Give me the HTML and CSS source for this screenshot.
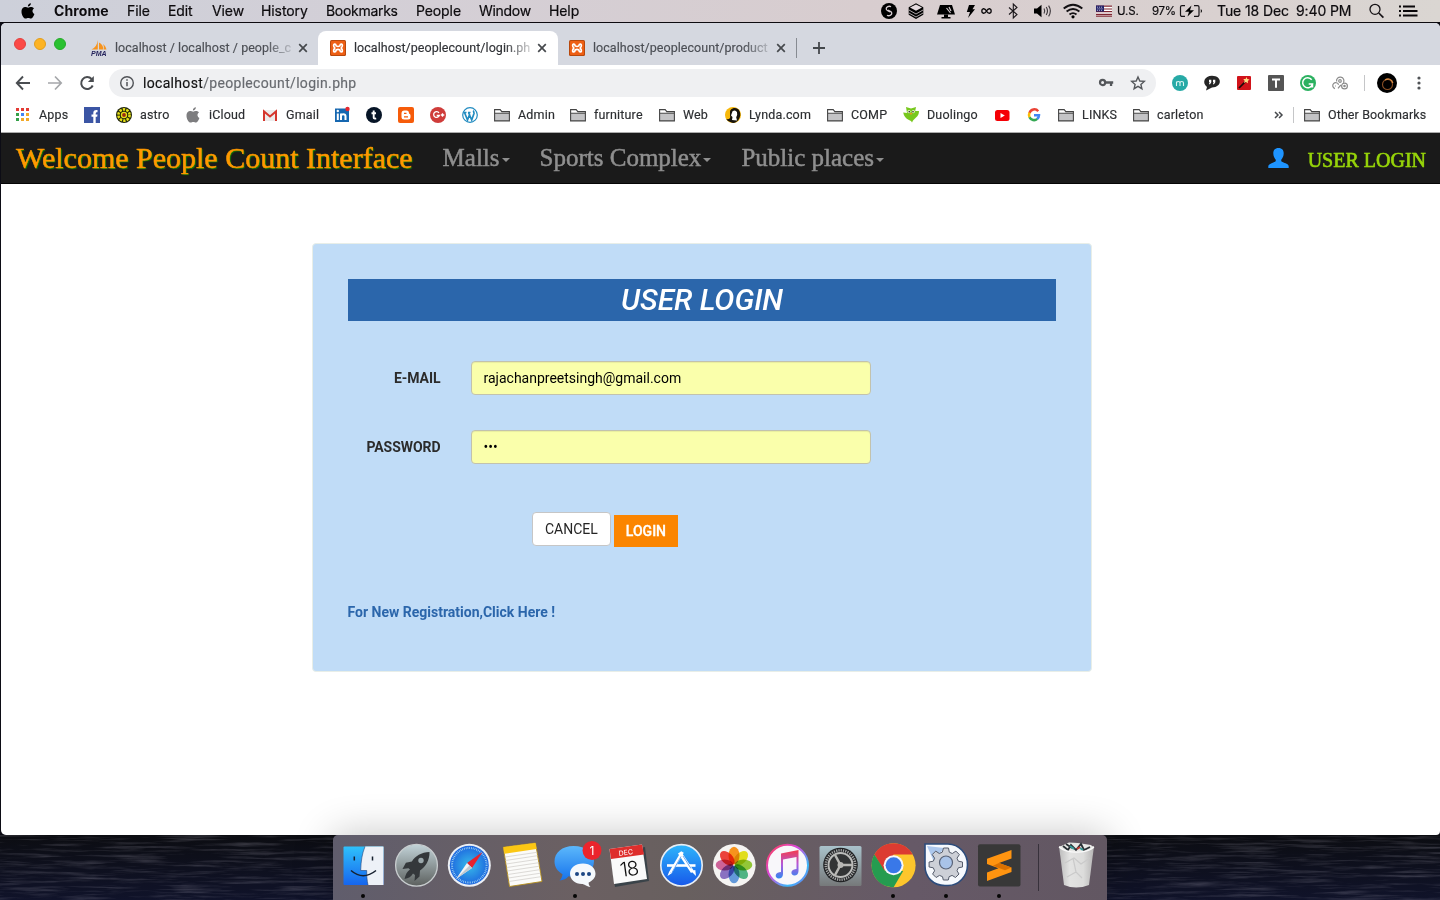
FILE: index.html
```html
<!DOCTYPE html>
<html lang="en">
<head>
<meta charset="utf-8">
<title>People Count</title>
<link rel="stylesheet" href="styles.css">
</head>
<body>
<svg class="defs" aria-hidden="true">
  <symbol id="folder" viewBox="0 0 16 16"><path d="M.7 14.3V2.5h5.6l1.6 2h7.400v9.800z" fill="#fff"/><path d="M1 6.500h14v7.500H1z" fill="#c4c4c6"/><path d="M.6 13.900V2.600h5.600l1.600 2h7.600v9.300zM.6 6.300h14.800" fill="none" stroke="#444" stroke-width="1.100"/></symbol>
  <symbol id="xampp" viewBox="0 0 16 16"><rect width="16" height="16" rx="1.500" fill="#b8480c"/><rect x="1" y="1" width="14" height="14" rx="1" fill="#ee5f14"/><path d="M6.200 5.900Q5.800 4 4.500 4.200T3.900 6.500Q5.400 8 3.900 9.500 3.200 11.700 4.500 11.900T6.200 10Q8 8.800 9.800 10q.4 2 1.700 1.900t.6-2.400Q10.600 8 12.100 6.500 12.800 4.400 11.500 4.200T9.800 5.900Q8 7.100 6.200 5.900z" fill="none" stroke="#fff" stroke-width="1.700"/></symbol>
  <symbol id="close" viewBox="0 0 10 10"><path d="M1.200 1.200l7.600 7.600M8.800 1.200L1.200 8.800" stroke="#46494d" stroke-width="1.700" fill="none"/></symbol>
  <symbol id="apple" viewBox="0 0 16 16"><path d="M10.900.2c.1 1.900-1.400 3.300-3 3.300C7.700 1.800 9.300.3 10.900.2zM14 5.500c-2.200 1.300-1.900 4.400.4 5.400-.6 2-2 4.600-3.600 4.600-.9 0-1.400-.6-2.500-.6-1.200 0-1.700.6-2.600.6C3.500 15.500 1.500 11.800 1.500 8.700c0-5 4.200-5.500 6.700-4 1.600-1 4.400-.9 5.800.8z"/></symbol>
</svg>

<header class="menubar">
  <svg width="16" height="16"><use href="#apple"/></svg>
  <b class="m-app">Chrome</b><span>File</span><span>Edit</span><span>View</span><span>History</span><span class="m-tight">Bookmarks</span><span>People</span><span class="m-tight">Window</span><span>Help</span>
  <svg width="18" height="18" viewBox="0 0 18 18"><circle cx="9" cy="9" r="8"/><path d="M11 4.800C9 3.400 6 5 6.200 7c.2 1.800 2.500 1.600 3.800 3M7 13.200c2 1.400 5-.2 4.800-2.200-.2-1.800-2.500-1.600-3.800-3" fill="none" stroke="#d8ced2" stroke-width="1.300"/></svg>
  <svg width="18" height="18" viewBox="0 0 18 18"><path d="M9 1.300l7.300 3.900v7.500L9 17l-7.300-4.300V5.200z"/><path d="M9 2.400l6 3.200-6 3.200-6-3.200z" fill="#e4dade"/><path d="M2 8l7 4 7-4M2 11l7 4 7-4" stroke="#d8ced2" fill="none" stroke-width=".8"/></svg>
  <svg width="18" height="18" viewBox="0 0 18 18"><path d="M3 3h12l3 9.500H0z"/><path d="M7 12.500h4V15h2.500v1.500h-9V15H7z"/><path d="M9.500 6l4 5M12 5l2 4" stroke="#d8ced2" stroke-width="1.200"/></svg>
  <svg width="12" height="18" viewBox="0 0 12 18"><path d="M4 3h6L7.500 7.300H10L3 16l2-6H1.800z"/></svg>
  <svg width="14" height="18" viewBox="0 0 14 18"><path d="M6.500 9C4.500 5.500 1.800 6.500 1.800 9s2.700 3.500 4.700 0 4.700-2.500 4.700 0-2.700 3.500-4.700 0z" fill="none" stroke="#0c0a0c" stroke-width="1.400"/></svg>
  <svg width="12" height="18" viewBox="0 0 12 18"><path d="M2 5.500l8 7L6.300 16V2L10 5.500l-8 7" fill="none" stroke="#1b171a" stroke-width="1.100"/></svg>
  <svg width="18" height="18" viewBox="0 0 18 18"><path d="M1 6.500h3l4.500-3.800v12.600L4 11.500H1z"/><path d="M11 6.500q1.500 2.500 0 5M13.200 5q2.600 4 0 8M15.600 3.600q3.500 5.400 0 10.800" fill="none" stroke="#3a3539" stroke-width="1.100"/></svg>
  <svg width="20" height="18" viewBox="0 0 20 18"><path d="M.7 6.500q9.300-7.500 18.600 0M3.600 9.500q6.400-5 12.800 0M6.500 12.400q3.500-2.600 7 0" fill="none" stroke="#131013" stroke-width="1.900"/><circle cx="10" cy="14.800" r="1.600"/></svg>
  <svg width="16" height="18" viewBox="0 0 16 18"><path fill="#fff" d="M0 3.500h16v11H0z"/><path d="M0 4.200h16M0 7h16M0 9.700h16M0 12.400h16M0 14.200h16" stroke="#7d2531" stroke-width="1.200"/><path d="M0 3.500h8v6.100H0z" fill="#26246a"/><path d="M1 5.200h6M1.500 6.800h6M1 8.300h6" stroke="#cfd0e8" stroke-width=".8" stroke-dasharray="1 1"/></svg>
  <span class="m-small">U.S.</span><span class="m-small m-batt">97%</span>
  <svg width="24" height="18" viewBox="0 0 24 18"><path d="M6 3.600H3a1.500 1.500 0 0 0-1.500 1.500v7.800A1.500 1.500 0 0 0 3 14.400h3M15 3.600h3.500A1.500 1.500 0 0 1 20 5.100v7.800a1.500 1.500 0 0 1-1.500 1.500H15" fill="none" stroke="#161316" stroke-width="1.200"/><path d="M21.800 7v4q2.400-2 0-4zM12.500 3.500L6 9.800h4L8.500 14.500l6.500-6.300h-4z"/></svg>
  <span>Tue 18 Dec</span><span>9:40 PM</span>
  <svg width="18" height="18" viewBox="0 0 18 18"><circle cx="7" cy="7.300" r="5" fill="none" stroke="#161316" stroke-width="1.300"/><path d="M10.800 11l4.600 4.700" stroke="#161316" stroke-width="1.700"/></svg>
  <svg width="20" height="18" viewBox="0 0 20 18"><path d="M0 4.500h2M4 4.500h12M0 9h2M4 9h14.500M0 13.500h2M4 13.500h14.500" stroke="#0a080a" stroke-width="1.900"/></svg>
</header>

<main class="window">
  <div class="tabs">
    <div class="lights"><i class="red"></i><i class="yellow"></i><i class="green"></i></div>
    <div class="tab"><svg width="16" height="16" viewBox="0 0 16 16"><path d="M6.800 0v9.500H.5C4 8 6.300 4.500 6.800 0zM8 2.500c3 1.500 4.500 4 4.300 7H8zM12 4c2 1.500 3 3.500 3.500 5.500h-2.700c.3-2 0-4-.8-5.500z" fill="#f7941d"/><text x="0" y="15.500" class="pma">PMA</text></svg><span class="tab-text">localhost / localhost / people_c</span><svg width="10" height="10"><use href="#close"/></svg></div>
    <div class="tab active"><svg width="16" height="16"><use href="#xampp"/></svg><span class="tab-text">localhost/peoplecount/login.ph</span><svg width="10" height="10"><use href="#close"/></svg></div>
    <div class="tab last"><svg width="16" height="16"><use href="#xampp"/></svg><span class="tab-text">localhost/peoplecount/product</span><svg width="10" height="10"><use href="#close"/></svg></div>
    <svg class="plus" width="12" height="12" viewBox="0 0 12 12"><path d="M6 0v12M0 6h12" stroke="#44484c" stroke-width="1.800"/></svg>
  </div>

  <div class="toolbar">
    <svg width="16" height="16" viewBox="0 0 16 16"><path d="M15 8H2M8 1.500L1.800 8 8 14.500" fill="none" stroke="#4a4d51" stroke-width="1.900"/></svg>
    <svg width="16" height="16" viewBox="0 0 16 16"><path d="M1 8h13M8 1.500L14.200 8 8 14.500" fill="none" stroke="#a5a7aa" stroke-width="1.700"/></svg>
    <svg width="16" height="16" viewBox="0 0 16 16"><path d="M13.700 10.500A6 6 0 1 1 12.600 4" fill="none" stroke="#4a4d51" stroke-width="2"/><path d="M14.800.9v6H8.900z" fill="#4a4d51"/></svg>
    <div class="omnibox">
      <svg width="16" height="16" viewBox="0 0 16 16"><circle cx="8" cy="8" r="6.300" fill="none" stroke="#505357" stroke-width="1.400"/><path d="M8 7v4.300M8 4.300v1.500" stroke="#505357" stroke-width="1.500"/></svg>
      <span class="url">localhost<em>/peoplecount/login.php</em></span>
      <svg width="16" height="16" viewBox="0 0 16 16"><circle cx="4.600" cy="7.500" r="2.600" fill="none" stroke="#54575b" stroke-width="2.200"/><path d="M7.500 6.300h7.700v2.500h-1v2.200h-2.300V8.800H7.500z" fill="#54575b"/></svg>
      <svg width="16" height="16" viewBox="0 0 16 16"><path d="M8 2l1.800 4 4.500.4-3.400 3 1 4.300L8 11.400l-3.900 2.300 1-4.300-3.400-3L6.200 6z" fill="none" stroke="#54575b" stroke-width="1.400"/></svg>
    </div>
    <svg width="16" height="16" viewBox="0 0 16 16"><circle cx="8" cy="8" r="8" fill="#27aaa6"/><path d="M4.500 11V6.500M4.500 8c0-2 3.500-2 3.500 0v3M8 8c0-2 3.500-2 3.500 0v3" stroke="#dff6f3" fill="none" stroke-width="1.100"/></svg>
    <svg width="16" height="16" viewBox="0 0 16 16"><path d="M8 .8c10.500 0 10.500 11.700 0 11.700L2 15.500l1-3.500C-2.500 8 .5.800 8 .8z" fill="#262626"/><path d="M5 4.700h2.300v2.500L6 9.300H4.900L5.600 7H5zM9 4.700h2.300v2.500L10 9.300H8.900L9.600 7H9z" fill="#fff"/></svg>
    <svg width="16" height="16" viewBox="0 0 16 16"><rect x="1" y="1" width="14" height="14" rx="1" fill="#d1131a"/><path d="M3 13l7-7" stroke="#1c0808" stroke-width="1.700"/><path d="M10.500 2l.8 2 2.200.5-1.700 1.500.2 2.300-2-1.200-2 .8.600-2.200L7.300 4l2.300.1z" fill="#ffdf86"/></svg>
    <svg width="16" height="16" viewBox="0 0 16 16"><rect width="16" height="16" rx="1" fill="#555"/><path d="M4 3.500h8v2H9v7.300H7V5.500H4z" fill="#fff"/></svg>
    <svg width="16" height="16" viewBox="0 0 16 16"><circle cx="8" cy="8" r="8" fill="#2bb160"/><path d="M11.700 4.800A5 5 0 1 0 12.500 9H8.700M12.500 9v3.500" fill="none" stroke="#fff" stroke-width="1.500"/></svg>
    <svg width="16" height="16" viewBox="0 0 16 16" fill="none" stroke="#8c8c8c" stroke-width="1.200"><path d="M4.600 6.500a3.700 3.700 0 1 1 6.800 1.200"/><circle cx="8" cy="6" r="1.300"/><path d="M3 13.600A3 3 0 1 1 6.600 9.800M3 11h.8M6 13.300L8.800 10"/><circle cx="12.500" cy="11" r="2.900"/><circle cx="12.500" cy="11" r=".7"/></svg>
    <i class="tool-sep"></i>
    <svg width="20" height="20" viewBox="0 0 20 20"><circle cx="10" cy="10" r="10"/><circle cx="10.500" cy="11.500" r="5" fill="none" stroke="#8a4f24" stroke-width="1.100"/><path d="M8 7c3-2 7-1 7.800 3" fill="none" stroke="#d98b45" stroke-width="1.300"/></svg>
    <svg width="6" height="16" viewBox="0 0 6 16" fill="#505357"><circle cx="3" cy="3" r="1.600"/><circle cx="3" cy="8" r="1.600"/><circle cx="3" cy="13" r="1.600"/></svg>
  </div>

  <nav class="bookmarks">
    <span class="bm"><svg width="16" height="16" viewBox="0 0 16 16"><path d="M1 1h3v3H1zM6 1h3v3H6zM11 1h3v3h-3z" fill="#e33b34"/><path d="M1 6h3v3H1z" fill="#34a048"/><path d="M6 6h3v3H6z" fill="#4285f4"/><path d="M11 6h3v3h-3zM11 11h3v3h-3zM6 11h3v3H6z" fill="#f2a928"/><path d="M1 11h3v3H1z" fill="#34a048"/></svg>Apps</span>
    <svg width="16" height="16" viewBox="0 0 16 16"><path fill="#3b55a4" d="M0 0h16v16H0z"/><path d="M9.300 16V9.800H7.500V7.400h1.800V6c0-2.300 1.200-3.200 4.200-2.900v2.100c-1.400 0-1.800.1-1.800 2.200h1.800l-.3 2.400h-1.500V16z" fill="#fff"/></svg>
    <span class="bm"><svg width="16" height="16" viewBox="0 0 16 16"><circle cx="8" cy="8" r="8" fill="#20250b"/><circle cx="8" cy="8" r="5.600" fill="none" stroke="#e4df16" stroke-width="2.600" stroke-dasharray="2.400 1.100"/><circle cx="8" cy="8" r="3.200" fill="#e4df16"/><circle cx="8" cy="8" r="1.900" fill="#9a2812"/></svg>astro</span>
    <span class="bm"><svg width="16" height="16" fill="#7d7d7f"><use href="#apple"/></svg>iCloud</span>
    <span class="bm"><svg width="16" height="16" viewBox="0 0 16 16"><path fill="#ececec" d="M1 3h14v11H1z"/><path d="M2 14V4.500l6 5 6-5V14" stroke="#d5372e" stroke-width="2" fill="none"/></svg>Gmail</span>
    <svg width="16" height="16" viewBox="0 0 16 16"><path d="M1 1.500h14V15H1z" fill="#1667b0"/><path d="M3.800 6.500V13M7 6.500V13M7 9c0-2.500 4.500-2.500 4.500.3V13" stroke="#fff" fill="none" stroke-width="2"/><circle cx="3.800" cy="4" r="1.200" fill="#fff"/><circle cx="13.500" cy="2" r="2.200" fill="#e4272f"/></svg>
    <svg width="16" height="16" viewBox="0 0 16 16"><circle cx="8" cy="8" r="8" fill="#071527"/><path d="M7.700 3.500v7q0 1.500 2.500.9M5.500 6.300h4.500" stroke="#fff" stroke-width="1.900" fill="none"/></svg>
    <svg width="16" height="16" viewBox="0 0 16 16"><rect width="16" height="16" rx="2" fill="#f65c0a"/><path d="M6.300 3.500h2.200q2.500 0 2.500 3 1.500.3 1.500 2V10q0 2.500-2.500 2.500H6.300q-2.800 0-2.800-2.500V6.500q0-3 2.800-3z" fill="#fff"/><path d="M6 6.300h2.500M6 9.800h4" stroke="#f65c0a" stroke-width="1.300"/></svg>
    <svg width="16" height="16" viewBox="0 0 16 16"><circle cx="8" cy="8" r="8" fill="#cf3c3a"/><path d="M9 5.900A2.900 2.900 0 1 0 9.300 8.500H6.700M10.800 8h3.500M12.500 6.300v3.500" stroke="#fff" fill="none" stroke-width="1.300"/></svg>
    <svg width="16" height="16" viewBox="0 0 16 16"><circle cx="8" cy="8" r="7.300" fill="#fff" stroke="#218bc0" stroke-width="1.200"/><path d="M2.500 5.500l3 7.500 2.300-6M6.500 5.500l3.200 7.500 2.300-6.500c.2-1-1-2-.2-3M2 5.500h2.500M6 5.500h2.500" stroke="#218bc0" stroke-width="1.700" fill="none"/></svg>
    <span class="bm"><svg width="16" height="16"><use href="#folder"/></svg>Admin</span>
    <span class="bm"><svg width="16" height="16"><use href="#folder"/></svg>furniture</span>
    <span class="bm"><svg width="16" height="16"><use href="#folder"/></svg>Web</span>
    <span class="bm"><svg width="16" height="16" viewBox="0 0 16 16"><circle cx="8" cy="8" r="8" fill="#f7b80b"/><path d="M5 5C5 1 12-1 14.500 4c1.500 3 .8 6-.8 8.500Q11 16.500 7 15.800 3 15 1 12c3 1 5-1 4-3.500z" fill="#17130c"/><path d="M7.500 4.200q3-2 4.500 1 .8 3-.8 5l.8 3.300-5-.5L7.500 10 6 8.500z" fill="#fff"/></svg>Lynda.com</span>
    <span class="bm"><svg width="16" height="16"><use href="#folder"/></svg>COMP</span>
    <span class="bm"><svg width="16" height="16" viewBox="0 0 16 16"><path d="M3 0l5 1.500L13 0l-.8 4L16 4q0 4-3 6.500l-3 3-1 2-1-1.500-3-1.500Q1 10 .2 5.500L4 6z" fill="#78c81e"/><circle cx="6" cy="4.600" r="1.600" fill="#e5f5c8"/><circle cx="10.300" cy="4.600" r="1.600" fill="#e5f5c8"/><path d="M6.800 6h2.700L8 8z" fill="#f19a20"/><circle cx="6.200" cy="4.800" r=".7"/><circle cx="10" cy="4.800" r=".7"/></svg>Duolingo</span>
    <svg width="16" height="16" viewBox="0 0 16 16"><rect x="1" y="3" width="14.500" height="11" rx="2.500" fill="#f50005"/><path d="M6.500 6v5l4.300-2.500z" fill="#fff"/></svg>
    <svg width="16" height="16" viewBox="0 0 16 16" fill="none" stroke-width="2.500"><path d="M12.200 4.200A5 5 0 0 0 3.500 6" stroke="#ea4335"/><path d="M3.600 5.700a5 5 0 0 0 0 4.700" stroke="#fbbc05"/><path d="M3.500 10.200a5 5 0 0 0 7.800 1.700" stroke="#34a853"/><path d="M11.200 12A5 5 0 0 0 13 8.200H8" stroke="#4285f4"/></svg>
    <span class="bm"><svg width="16" height="16"><use href="#folder"/></svg>LINKS</span>
    <span class="bm"><svg width="16" height="16"><use href="#folder"/></svg>carleton</span>
    <svg width="10" height="10" viewBox="0 0 10 10"><path d="M1 2l3 3-3 3M5 2l3 3-3 3" fill="none" stroke="#46494d" stroke-width="1.500"/></svg>
    <i class="bm-sep"></i>
    <span class="bm bm-other"><svg width="16" height="16"><use href="#folder"/></svg>Other Bookmarks</span>
  </nav>

  <div class="site-nav">
    <a class="brand">Welcome People Count Interface</a>
    <a>Malls<i class="caret"></i></a>
    <a>Sports Complex<i class="caret"></i></a>
    <a>Public places<i class="caret"></i></a>
    <div class="account">
      <svg width="21" height="20" viewBox="0 0 21 20"><path d="M10.500 0c3.700 0 5.200 2.400 5.200 5.300 0 2.700-1 4.700-2.300 6.200-.5 1.500 0 2 1.200 2.600 2.500 1.300 6.100 2 6.100 4.200V20H.3v-1.700c0-2.200 3.600-2.900 6.100-4.200 1.200-.6 1.700-1.100 1.200-2.600C6.300 10 5.300 8 5.300 5.300 5.300 2.400 6.800 0 10.500 0z" fill="#1e94ff"/></svg>
      <span class="user-login">USER LOGIN</span>
    </div>
  </div>

  <section class="page">
    <form class="panel">
      <h2>USER LOGIN</h2>
      <div class="row"><label>E-MAIL</label><div class="input">rajachanpreetsingh@gmail.com</div></div>
      <div class="row"><label>PASSWORD</label><div class="input">•••</div></div>
      <div class="actions"><span class="btn cancel">CANCEL</span><span class="btn login">LOGIN</span></div>
      <a class="register">For New Registration,Click Here !</a>
    </form>
  </section>
</main>

<footer class="desktop">
  <svg class="texture" width="1440" height="65" aria-hidden="true"><filter id="streaks" x="0" y="0" width="100%" height="100%"><feTurbulence type="fractalNoise" baseFrequency=".018 .35" numOctaves="4" seed="4"/><feColorMatrix values="0 0 0 0 .45  0 0 0 0 .43  0 0 0 0 .52  1.6 0 0 0 -.72"/></filter><rect width="1440" height="65" filter="url(#streaks)"/></svg>
  <div class="dock">
    <div class="app on"><svg viewBox="0 0 44 44"><defs><linearGradient id="fb" x2="0" y2="1"><stop stop-color="#2fc1fb"/><stop offset="1" stop-color="#1665ee"/></linearGradient></defs><rect x="2.500" y="3.500" width="40" height="38.500" rx="1" fill="url(#fb)"/><path d="M24 3.500h18.500V42H27c-1-5-1.400-9-1.300-14.500h-6C20 18 21 11 24 3.500z" fill="#edf1f7"/><path d="M24 3.500c-3 7.500-4 14.500-4.300 24h6C25.600 33 26 37 27 42" fill="none" stroke="#1c3f78" stroke-width=".6"/><path d="M13.300 13.500v4M31.500 13.500v4" stroke="#16202f" stroke-width="1.500"/><path d="M10 27.500q12 10.500 25 0" fill="none" stroke="#16202f" stroke-width="1.500"/></svg></div>
    <div class="app"><svg viewBox="0 0 44 44"><defs><linearGradient id="lg" x2="0" y2="1"><stop stop-color="#c2d3d8"/><stop offset="1" stop-color="#5c605e"/></linearGradient></defs><circle cx="22.500" cy="22.300" r="20.900" fill="url(#lg)" stroke="#c8cdcf" stroke-width="1.300"/><path d="M35.500 9c-8 .2-14.500 4-17.600 9.500l-6 1.300L8.500 26l6-.7 1.500 1.200c-3 2-4.500 5-5.500 9.500 4-.8 7-2.300 8.500-5.500l2 1.500-.5 6 5-4.500.5-6C31.500 24 35.800 17 35.500 9z" fill="#34383b"/><circle cx="27" cy="17.500" r="2.700" fill="#9ba8ac"/></svg></div>
    <div class="app"><svg viewBox="0 0 44 44"><defs><radialGradient id="sf"><stop stop-color="#38bbe9"/><stop offset="1" stop-color="#1d67df"/></radialGradient></defs><circle cx="22.300" cy="22.300" r="21.500" fill="#edf0f4"/><circle cx="22.300" cy="22.300" r="19.500" fill="url(#sf)"/><circle cx="22.300" cy="22.300" r="17.300" fill="none" stroke="#a8daf4" stroke-width="2" stroke-dasharray=".7 1.100"/><path d="M35.500 9L25 25l-5-5z" fill="#e8212c"/><path d="M9 36l11-16 5 5z" fill="#f4f4f4"/><path d="M9 36l16-11-2.500-2.500z" fill="#bfc8cf"/></svg></div>
    <div class="app"><svg viewBox="0 0 44 44"><path d="M3.300 4.200L35.500 0 42 38.500 9.500 43.500z" fill="#fbfbf9" stroke="#b58f1a" stroke-width=".9"/><path d="M3.300 4.200L35.500 0l1 6-32 4.800z" fill="#fbc713"/><path d="M5 14l32-4.700M5.500 17.500l32-4.800M6.200 21l32-4.800M6.800 24.500l32-4.800M7.300 28l32-4.800M7.800 31.500l32-4.800M8.400 35l32-4.800M8.900 38.500l32-4.800" stroke="#d3d1cd" stroke-width=".8"/></svg></div>
    <div class="app on"><svg viewBox="0 0 44 44"><defs><linearGradient id="ms" x2="0" y2="1"><stop stop-color="#5cb8fb"/><stop offset="1" stop-color="#1673ec"/></linearGradient></defs><path d="M20.500 3C9 3 1.500 9.500 1.500 18.500c0 5.500 3.200 10 8 12.700-.3 3-1.500 5-3 6.300 4-.2 7-1.700 9-4.200 14 3 25.500-4.500 25.500-15C41 9.500 33 3 20.500 3z" fill="url(#ms)"/><path d="M30 20.500c-8 0-13 4.500-13 10.300S22 41 29 41c2.500 0 4 2.500 8.500 3-1.500-1.500-2-3-1.800-4.500 4.300-2 6.800-5 6.800-8.700 0-5.800-5-10.300-12.500-10.300z" fill="#f4f8fc"/><g fill="#1b4684"><circle cx="24" cy="31" r="2"/><circle cx="30" cy="31" r="2"/><circle cx="36" cy="31" r="2"/></g><circle cx="39" cy="7.500" r="9.500" fill="#eb242c"/><text x="39" y="12" class="badge">1</text></svg></div>
    <div class="app"><svg viewBox="0 0 44 44"><path d="M4 10L9 44l34-6-4-34z" fill="#3a4349"/><path d="M3.500 6L36 1.500 41 36 8 41z" fill="#fafafa"/><path d="M3.500 6L36 1.500l2 10L5 16z" fill="#de2e2c"/><g transform="rotate(-8 22 22)"><text x="21.500" y="11.800" class="cal-m">DEC</text><text x="22.500" y="33" class="cal-d">18</text></g></svg></div>
    <div class="app"><svg viewBox="0 0 44 44"><defs><linearGradient id="as" x2="0" y2="1"><stop stop-color="#2db5fb"/><stop offset="1" stop-color="#1758ea"/></linearGradient></defs><circle cx="22.500" cy="22.300" r="20.700" fill="url(#as)" stroke="#e8eef4" stroke-width="1.600"/><path d="M8 22.500h28.500" stroke="#fff" stroke-width="2.600"/><path d="M23.500 9L11.500 29.500" stroke="#fff" stroke-width="3"/><path d="M20.500 9.500L33.500 29" stroke="#fff" stroke-width="3.600"/><path d="M10.200 28.500l-1.700 4.500 4.200-2.800M32 28l5 5-.7-6" fill="#fff"/><path d="M22 13.500l-9 16M24 13l8 12.500" stroke="#3585e8" stroke-width=".7"/></svg></div>
    <div class="app"><svg viewBox="0 0 44 44"><circle cx="22.300" cy="22.300" r="21.300" fill="#f5f4f2"/><g class="petals"><ellipse cx="22" cy="12.500" rx="5.500" ry="8.800" fill="#f78d10"/><ellipse cx="22" cy="12.500" rx="5.500" ry="8.800" fill="#e0dc10" transform="rotate(45 22 22)"/><ellipse cx="22" cy="12.500" rx="5.500" ry="8.800" fill="#8cc42c" transform="rotate(90 22 22)"/><ellipse cx="22" cy="12.500" rx="5.500" ry="8.800" fill="#45b07c" transform="rotate(135 22 22)"/><ellipse cx="22" cy="12.500" rx="5.500" ry="8.800" fill="#5a94d8" transform="rotate(180 22 22)"/><ellipse cx="22" cy="12.500" rx="5.500" ry="8.800" fill="#8369be" transform="rotate(225 22 22)"/><ellipse cx="22" cy="12.500" rx="5.500" ry="8.800" fill="#c95a92" transform="rotate(270 22 22)"/><ellipse cx="22" cy="12.500" rx="5.500" ry="8.800" fill="#ea3930" transform="rotate(315 22 22)"/></g></svg></div>
    <div class="app"><svg viewBox="0 0 44 44"><defs><linearGradient id="mu" y2="1"><stop stop-color="#ff3e4c"/><stop offset=".4" stop-color="#d748df"/><stop offset=".75" stop-color="#38b9f9"/><stop offset="1" stop-color="#846bee"/></linearGradient><linearGradient id="nt" x2="0" y2="1"><stop stop-color="#f43c4b"/><stop offset=".5" stop-color="#b457d9"/><stop offset="1" stop-color="#3187f0"/></linearGradient></defs><circle cx="22.500" cy="22.300" r="20.500" fill="#f8f7fa" stroke="url(#mu)" stroke-width="2"/><path d="M16 10.500L33.500 7v21c0 3-2 4.500-4 4.500-4 0-4.300-5.500.5-6.200l1.500-.3V14L18 16.500V31c0 3-2 4.500-4.200 4.500-4 0-4.300-5.500.5-6.200l1.700-.3z" fill="url(#nt)"/></svg></div>
    <div class="app"><svg viewBox="0 0 44 44"><defs><linearGradient id="sp" x2="0" y2="1"><stop stop-color="#a9c2cb"/><stop offset="1" stop-color="#76797a"/></linearGradient></defs><rect x="1.500" y="3" width="42" height="40" rx="1.500" fill="url(#sp)"/><circle cx="22.500" cy="22" r="17.300" fill="#222426"/><circle cx="22.500" cy="22" r="14.700" fill="none" stroke="#a6a7a7" stroke-width="2.600" stroke-dasharray="1.200 1.100"/><circle cx="22.500" cy="22" r="12" fill="#323435" stroke="#bcbdbb" stroke-width="2"/><path d="M22.500 22H35M22.500 22l-6-11M22.500 22l-6 11" stroke="#b8b8b5" stroke-width="2.500"/><circle cx="22.500" cy="22" r="3" fill="#b8b8b5"/></svg></div>
    <div class="app on"><svg viewBox="0 0 44 44"><circle cx="22.600" cy="22.300" r="22" fill="#fdc62c"/><path d="M3.400 11.500A22 22 0 0 1 41.700 11.500H22.600L13 28z" fill="#dc3b31"/><path d="M3.400 11.500A22 22 0 0 0 22.600 44.300L32.200 28 13.500 27.500z" fill="#259c50"/><circle cx="22.600" cy="22.300" r="10" fill="#f5f7fa"/><circle cx="22.600" cy="22.300" r="8" fill="#3978e8"/></svg></div>
    <div class="app on"><svg viewBox="0 0 44 44"><path d="M1 1h23a19.800 20.500 0 0 1 19.500 21A19.500 20.500 0 0 1 24 42.500h-3C9 42.500 1 34 1 23z" fill="#f6f9fd" stroke="#2c4c7c" stroke-width="1.600"/><path d="M3 3l17 2-10 14z" fill="#adc8ed"/><path d="M19.500 6.500h5l.8 4.200 3 1.300 3.600-2.400 3.500 3.500-2.400 3.600 1.300 3 4.200.8v5l-4.200.8-1.300 3 2 3.200-3.500 3.500-3.400-2.100-3 1.300-.8 3.300h-5l-.8-3.300-3-1.300-3.400 2.100-3.500-3.500 2-3.200-1.300-3-4.200-.8v-5l4.200-.8 1.300-3-2.400-3.600 3.500-3.500 3.600 2.400 3-1.300z" transform="translate(0 -1.500)" fill="#cdd0d7" stroke="#565d6c" stroke-width="1"/><circle cx="22" cy="19.500" r="6.500" fill="#a9c3e8" stroke="#596377" stroke-width="1.200"/></svg></div>
    <div class="app on"><svg viewBox="0 0 44 44"><rect x="1" y="1.300" width="42.500" height="42.300" rx="2" fill="#383838"/><path d="M10 15.800L34.500 7v8.500L22 20l12.500 4.500V29L10 38v-8.500l11.500-4.200L10 21z" fill="#ff9410"/><path d="M34.500 24.500L22 20l-6 2.800 12 4.500z" fill="#db7000"/></svg></div>
    <i class="dock-sep"></i>
    <div class="app"><svg viewBox="0 0 44 44"><defs><linearGradient id="tr"><stop stop-color="#bcbcbc"/><stop offset=".3" stop-color="#e3e3e2"/><stop offset=".7" stop-color="#dcdcdb"/><stop offset="1" stop-color="#b5b4b4"/></linearGradient></defs><path d="M5 3h35l-5 39q-13 5-25 0z" fill="url(#tr)"/><path d="M11 20l9-5 7 6 9-6M13 34l9-5 6 6M19 15l3 14" stroke="#cacaca" fill="none" stroke-width="1.200"/><path d="M5 4L15-.5l9 .5 13 2 3 3c-7 5-28 5.500-35-1z" fill="#e7e7e5"/><path d="M9 3l5 4 3-5 5 5 5-6 3 6 6-3M12 1l6 4" stroke="#292f34" fill="none" stroke-width="1.800"/><path d="M16 3l4 3M26 5l3 2" stroke="#359a97" stroke-width="2"/><path d="M23 6l3-2" stroke="#c4382f" stroke-width="2"/><path d="M5 4c8 7 27 7 35 0" fill="none" stroke="#fafafa" stroke-width="1.200"/></svg></div>
  </div>
</footer>
</body>
</html>
```
FILE: styles.css
```css
* { box-sizing: border-box; }
body { margin: 0; width: 1440px; height: 900px; overflow: hidden; background: #0c0c15; display: flex; flex-direction: column; font-family: Roboto, sans-serif; }
svg { display: block; overflow: visible; }
.defs { position: absolute; width: 0; height: 0; }

.menubar { height: 23px; flex: none; padding-left: 20px; border-bottom: 1px solid #0d0b10; background: linear-gradient(90deg, #cdd0da 0, #d4cfd6 30%, #d8cdcf 60%, #d9d1d0 85%, #dad6d2 100%); display: grid; grid-template-columns: 34px 73px 41px 44px 49px 65px 90px 63px 70px 331px 27px 30px 28px 15px 27px 26px 30px 33px 21px 35px 27px 38px 79px 72px 31px 20px; align-items: center; font: 500 14px/22px Inter, sans-serif; color: #0d0b0e; white-space: nowrap; }
.menubar span { font-weight: 400; letter-spacing: -.1px; -webkit-text-stroke: .2px #0d0b0e; }
.menubar .m-app { font-weight: 700; letter-spacing: .1px; }
.menubar .m-tight { letter-spacing: -.3px; }
.menubar .m-small { font-size: 11.500px; }
.menubar .m-batt { letter-spacing: -.3px; }

.window { margin-left: 1px; height: 812px; flex: none; background: #fff; border-radius: 5px 5px 4px 5px; overflow: hidden; display: flex; flex-direction: column; }
.tabs { height: 42px; flex: none; background: #d5d8e0; display: grid; grid-template-columns: 78px 239px 240px 239px 1fr; align-items: end; }
.lights { display: flex; gap: 8px; padding: 0 0 15px 13px; }
.lights i { width: 12px; height: 12px; border-radius: 50%; }
.red { background: #fb4946; border: 1px solid #e3403e; }
.yellow { background: #fdb324; border: 1px solid #e29e1c; }
.green { background: #2ac131; border: 1px solid #25ab29; }
.tab { height: 34px; padding-left: 12px; display: grid; grid-template-columns: 24px 183px 10px; align-items: center; font: 12.500px/16px Roboto, sans-serif; color: #4b4e54; }
.tab.active { background: #fff; border-radius: 8px 8px 0 0; color: #303236; }
.tab.last { padding-left: 11px; border-right: 1px solid #878b92; height: 20px; margin-bottom: 7px; }
.tab-text { white-space: nowrap; letter-spacing: .05px; -webkit-text-stroke: .15px; -webkit-mask-image: linear-gradient(90deg, #000 150px, rgba(0, 0, 0, .25) 175px); mask-image: linear-gradient(90deg, #000 150px, rgba(0, 0, 0, .25) 175px); }
.pma { font: italic 700 7px "Liberation Sans", sans-serif; fill: #25245c; }
.plus { margin: 0 0 11px 16px; }

.toolbar { height: 36px; flex: none; padding-left: 14px; display: grid; grid-template-columns: 32px 32px 30px 1063px repeat(5, 32px) 32px 13px 39px 6px; align-items: center; }
.omnibox { width: 1047px; height: 28px; border-radius: 14px; background: #eff0f2; padding-left: 10px; display: grid; grid-template-columns: 24px 955px 32px 16px; align-items: center; }
.url { font-size: 14px; letter-spacing: .32px; color: #111; -webkit-text-stroke: .15px; }
.url em { font-style: normal; color: #686b70; }
.tool-sep { width: 1px; height: 16px; background: #c5c6c8; }

.bookmarks { height: 32px; flex: none; padding: 0 0 4px 14px; border-bottom: 1px solid #acacac; display: grid; grid-template-columns: 69px 32px 69px 77px 72px 32px 32px 32px 32px 32px 76px 89px 66px 102px 76px 91px 32px 32px 75px 141px 19px 11px 1fr; align-items: center; font-size: 12.500px; letter-spacing: .17px; color: #2c2e31; white-space: nowrap; -webkit-text-stroke: .15px; }
.bm { display: flex; align-items: center; gap: 8px; }
.bm-other { letter-spacing: .1px; }
.bm-sep { width: 1px; height: 16px; background: #c5c6c8; }

.site-nav { height: 51px; flex: none; background: #1a1a1a; border-bottom: 1px solid #050505; padding: 0 14px 0 15px; display: flex; align-items: center; font: 25px/48px "Liberation Serif", serif; color: #8f8f8f; -webkit-text-stroke: .5px; white-space: nowrap; }
.site-nav a { margin-right: 30px; height: 50px; display: flex; align-items: center; gap: 2px; }
.site-nav .brand { font-size: 30px; color: #ff9800; text-shadow: 1px 1px 1px #148800; }
.caret { border: 4px solid transparent; border-top-color: #8f8f8f; border-bottom: 0; margin-top: 4px; }
.account { margin-left: auto; display: flex; align-items: center; gap: 19px; }
.user-login { font-size: 20px; color: #96d30a; padding-top: 4px; text-shadow: 0 0 1px #6e9e08; }

.page { flex: 1; padding: 59px 348px 0 311px; font: 14px/20px Roboto, sans-serif; }
.panel { width: 780px; height: 429px; border: 1px solid #e8eee8; border-radius: 4px; background: #c0dcf7; padding: 35px; }
.panel h2 { margin: 0 0 40px; height: 42px; background: #2b66ab; color: #fff; text-align: center; font: italic 500 30px/42px Roboto, sans-serif; letter-spacing: -.05px; }
.row { display: grid; grid-template-columns: 92.500px 400px; gap: 30.500px; align-items: center; margin-bottom: 35px; }
.row label { text-align: right; font-weight: 700; color: #2b2b2b; letter-spacing: -.05px; }
.input { height: 34px; padding: 6px 11.500px; border: 1px solid #c2c2ae; border-radius: 4px; background: #faffab; color: #000; box-shadow: inset 0 1px 1px rgba(0, 0, 0, .07); }
.actions { margin: 48px 0 0 184px; display: flex; gap: 3px; align-items: start; }
.btn { height: 34px; padding: 6px 12px; border: 1px solid #c6c6c6; border-radius: 4px; background: #fff; color: #252525; }
.btn.login { height: 32px; margin-top: 3px; border: 0; border-radius: 0; background: #fb8500; color: #fff; font-weight: 500; -webkit-text-stroke: .3px; }
.register { display: block; margin: 55px 0 0 -.5px; color: #2b66ab; font-weight: 700; }

.desktop { position: relative; height: 65px; flex: none; display: flex; justify-content: center; background: linear-gradient(180deg, #0c0d12, #10132a); }
.texture { position: absolute; inset: 0; opacity: .35; }
.dock { position: relative; width: 774px; height: 65px; padding-left: 3.500px; border-radius: 5px 5px 0 0; background: linear-gradient(90deg, #605d6c, #6b6062 32%, #68605f 45%, #665967 75%, #625762); box-shadow: 0 0 40px rgba(0, 0, 0, .24); display: flex; }
.app { width: 53px; padding-top: 8px; display: flex; flex-direction: column; align-items: center; }
.app svg { width: 44px; height: 44px; }
.app.on::after { content: ""; width: 4px; height: 4px; margin-top: 7px; border-radius: 50%; background: #050505; }
.dock-sep { width: 1px; height: 47px; margin: 9px 10.500px 0 12.500px; background: #37313b; }
.petals ellipse { mix-blend-mode: multiply; opacity: .95; }
.petals { isolation: isolate; }
.badge { font: 12px Inter, sans-serif; fill: #fff; text-anchor: middle; }
.cal-m { font: 7px Inter, sans-serif; fill: #fff; text-anchor: middle; }
.cal-d { font: 300 20px Inter, sans-serif; fill: #111; text-anchor: middle; letter-spacing: -1px; }
```
